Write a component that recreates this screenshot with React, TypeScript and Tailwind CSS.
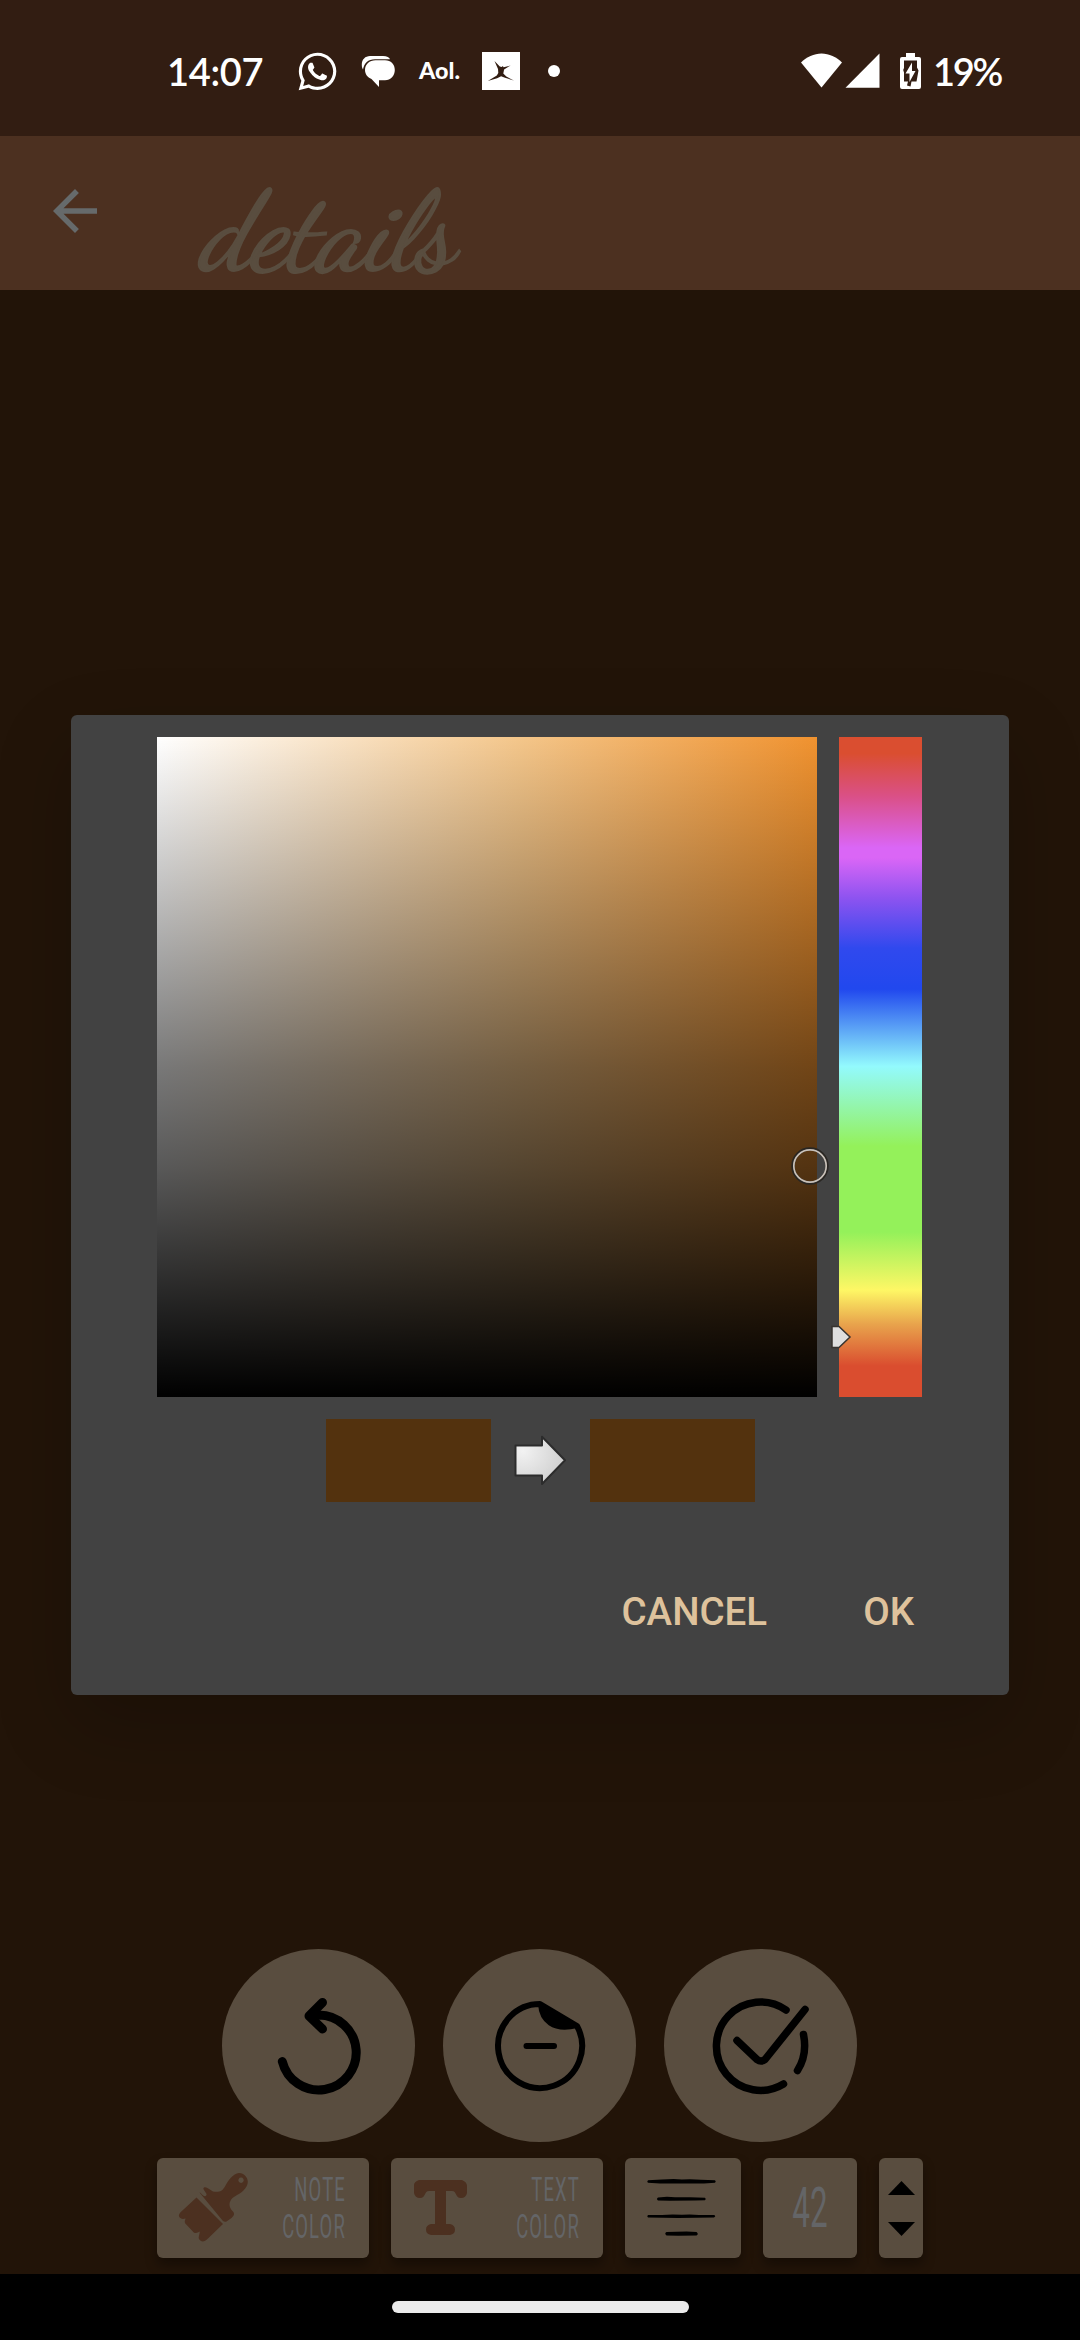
import React from "react";
import { FaWhatsapp } from "react-icons/fa";

function StatusBar() {
  return (
    <div className="flex h-[136px] w-full items-start justify-between bg-[#321d12] pr-[78px] pl-[167px] text-white">
      <div className="flex h-[142px] items-center">
        <span className="w-[130px] font-['Lato'] text-[38px] leading-none font-semibold tracking-[-0.3px]">14:07</span>
        <FaWhatsapp className="h-[43px] w-[41px]" />
        <svg className="ml-[23px] h-[36px] w-[36px]" viewBox="361 54 36 36">
          <path d="M370 57h13c4 0 6.500 1.500 7 3.200h-15c-7 0-11 4-12 10.300-1-1.500-1.200-3-1.200-5 0-5 3.500-8.500 8.200-8.500z" fill="#fff" />
          <path d="M375.500 61.200h9.500c6 0 9.800 4 9.800 9.800s-4 10.300-9.800 10.300h-6v6.700l-7.500-8c-4-1.600-6.500-5-6.500-9 0-5.800 4.500-9.800 10.500-9.800z" fill="#fff" />
        </svg>
        <span className="ml-[22px] w-[41px] origin-left scale-x-[1.06] font-['Lato'] text-[22px] leading-none font-black">Aol.</span>
        <svg className="ml-[22px] h-[38px] w-[38px]" viewBox="0 0 38 38">
          <path d="M0 0h38v38H0z" fill="#fff" />
          <path d="M12.500 9 17.800 14.500l2 .5 1-1 .8 1.200 7-1.700-6.500 4-.8 4 3 3 7.500 4-9.500-3-3.200-1.200-4 2-9.300 2.700 9-5.500 1.500-2.500-.3-4z" fill="#321d12" />
        </svg>
        <span className="ml-[28px] h-3 w-3 rounded-full bg-white" />
      </div>
      <div className="flex h-[142px] items-center">
        <svg className="h-[38px] w-[120px]" viewBox="801 52 120 38">
          <path d="M801 62.500c5.500-5.500 13-9 20.500-9s15 3.500 20.500 9L821.500 87.500z" fill="#fff" />
          <path d="M845.500 87.800 879.500 53.500v34.300z" fill="#fff" />
          <path d="M906 53h9v4h4a2 2 0 0 1 2 2v28a2 2 0 0 1-2 2h-17a2 2 0 0 1-2-2V59a2 2 0 0 1 2-2h4z" fill="#fff" />
          <path d="M904 60.500h13v7l1.500 3-2 11-5 0-1 5-3.500-1 1-4h-4v-9l-.8-2.500.8-2z" fill="#321d12" />
          <path d="M912 62.500v8.500h3.500L909.500 82v-8.500H905.500z" fill="#fff" />
        </svg>
        <span className="ml-[12px] w-[69px] font-['Lato'] text-[38px] leading-none font-semibold tracking-[-2.300px]">19%</span>
      </div>
    </div>
  );
}

function Header() {
  return (
    <header className="flex h-[154px] w-full bg-[#4c3020] pt-[42px] pl-[42px]">
      <svg className="h-[66px] w-[66px]" viewBox="0 0 24 24" fill="#666a6b">
        <path d="M20 11H7.830l5.590-5.590L12 4l-8 8 8 8 1.410-1.410L7.830 13H20v-2z" />
      </svg>
      <h1 className="mt-[2px] ml-[94px] origin-bottom-left skew-x-6 font-['Dancing_Script','Liberation_Serif',serif] text-[111px] leading-[106px] tracking-[-1px] text-[#594d3f] italic [-webkit-text-stroke:2px_#594d3f]">details</h1>
    </header>
  );
}

function RoundButton({ children }: { children: React.ReactNode }) {
  return (
    <button className="flex h-[193px] w-[193px] items-center justify-center rounded-full bg-[#594d3f]">
      {children}
    </button>
  );
}

function Actions() {
  return (
    <div className="mr-px flex justify-center gap-[28px]">
      <RoundButton>
        <svg className="h-[193px] w-[193px]" viewBox="0 0 193 193" fill="none" stroke="#000" strokeWidth="9" strokeLinecap="round" strokeLinejoin="round">
          <path d="M60.300 112.500A37.500 37.500 0 1 0 96.500 66L89 66.500" />
          <path d="M100.500 53.500 87 67l13.500 13" />
        </svg>
      </RoundButton>
      <RoundButton>
        <svg className="h-[193px] w-[193px]" viewBox="0 0 193 193" fill="none" stroke="#000" strokeWidth="6" strokeLinecap="round" strokeLinejoin="round">
          <path d="M97 55A42 42 0 1 0 134 77z" />
          <path d="M97 55C98 72 110 83 134 77z" fill="#000" strokeWidth="4" />
          <path d="M83.500 97H111" />
        </svg>
      </RoundButton>
      <RoundButton>
        <svg className="h-[193px] w-[193px]" viewBox="0 0 193 193" fill="none" stroke="#000" strokeWidth="7.500" strokeLinecap="round" strokeLinejoin="round">
          <path d="M122 61A44.200 44.200 0 1 0 119.500 135" />
          <path d="M139.500 85.500c2.500 12.500 1 25-6 36" />
          <path d="M73 91.500 93 110.500q4 3 8 0L141 60.500" />
        </svg>
      </RoundButton>
    </div>
  );
}

const tile = "h-[100px] rounded-md bg-[#594d3f] shadow-[0_7px_12px_rgba(0,0,0,0.35)]";

function TwoLine({ top, bottom }: { top: string; bottom: string }) {
  return (
    <div className="-ml-16 origin-right scale-x-[0.56] text-right font-['Roboto'] text-[33px] leading-[37px] font-normal tracking-[2px] text-[#646567]">
      <div>{top}</div>
      <div>{bottom}</div>
    </div>
  );
}

function Toolbar() {
  return (
    <div className="mt-4 flex justify-center gap-[22px]">
      <button className={`${tile} flex w-[212px] items-start justify-between pt-[13px] pr-[23px] pl-[20px]`}>
        <svg className="h-[74px] w-[74px] shrink-0" viewBox="177 2171 74 74" fill="#4c3020">
          <path
            fillRule="evenodd"
            d="M196.500 2197.500 223 2224l-15 14.500c-4 4-7 3.500-9 .500-1-1.500.5-4 .8-7.500-2 1.500-4 2-6 1l-8.500-9c-1.500-3 1-5 0-5-3 1-5 0-6-1.500-1-2 0-3 1.500-5z"
          />
          <path
            fillRule="evenodd"
            d="M199.500 2192.500c1-1 5 6.500 7 2.500 1-2-5-6-2.500-7.500 3-1 5 2 9 4 6 1 9 0 12-5 3-6 8-13 14-13.500 6 0 10 6 8.500 11-2 7-9 10-15 14-4 4-4 9 0 13 3 3 1 5-1 7l-5 3.500q-2 1-4-1zM241 2177.500a2.700 2.700 0 1 0 .1 0z"
          />
        </svg>
        <TwoLine top="NOTE" bottom="COLOR" />
      </button>
      <button className={`${tile} flex w-[212px] items-start justify-between pt-[13px] pr-[23px] pl-[20px]`}>
        <svg className="h-[74px] w-[60px] shrink-0" viewBox="411 2171 60 74" fill="#4c3020">
          <path d="M419 2180h43q5 2 5 6v7q-1 5-6 5c-6 0-4-7-9-7h-6v33h4q5 1 5 5.500t-5 5.500h-19q-5-1-5-5.500t5-5.500h4v-33h-6c-5 0-3 7-9 7q-5 0-6-5v-8q0-3 5-5z" />
        </svg>
        <TwoLine top="TEXT" bottom="COLOR" />
      </button>
      <button className={`${tile} flex w-[116px] items-center justify-center`}>
        <svg className="h-[100px] w-[116px]" viewBox="0 0 116 100">
          <path d="M23 22.300q-1.500 1.500 0 2.500l12 .8h44l11-.8q1.500-1.300 0-2.500l-14-.5q-8-1-19-.4-9-.8-20 .2z" />
          <path d="M33 39.500q-2 1.500 0 3l12 .3 25-.2 10-.4q1.500-1.200 0-2.400l-15-.5-15 0-8-.6z" />
          <path d="M23 57q-1.500 1.300 0 2.600l30 .4 36-.4q2.500-1.300 0-2.500l-15-.2q-8-.9-17-.2-11-.7-20 .2z" />
          <path d="M41.500 74q-2.500 1.500 0 3.500l12 .2 18-.2q2.500-1.500 0-3.500l-10-.5z" />
        </svg>
      </button>
      <button className={`${tile} flex w-[94px] items-center justify-center`}>
        <span className="scale-x-[0.57] font-['Roboto'] text-[55px] leading-none font-normal text-[#646567]">42</span>
      </button>
      <div className={`${tile} flex w-[44px] flex-col items-center justify-center gap-[27px]`}>
        <svg className="h-[14px] w-[27px]" viewBox="0 0 27 14"><path d="M0 14 13.500 0 27 14z" /></svg>
        <svg className="h-[14px] w-[27px]" viewBox="0 0 27 14"><path d="M0 0h27L13.500 14z" /></svg>
      </div>
    </div>
  );
}

function ColorDialog() {
  return (
    <section
      role="dialog"
      className="absolute top-[715px] left-[71px] flex h-[980px] w-[938px] flex-col items-center rounded-md bg-[#424242] pt-[22px] shadow-[0_30px_80px_rgba(0,0,0,0.2)]"
    >
      <div className="mr-px flex gap-[22px]">
        <div className="relative h-[660px] w-[660px] bg-[linear-gradient(to_bottom,rgba(0,0,0,0)_0%,rgba(0,0,0,0.38)_36%,rgba(0,0,0,0.53)_50%,rgba(0,0,0,0.65)_65%,#000_100%),linear-gradient(to_right,#fff,#f4c68a_55%,#f0922f)]">
          <svg className="absolute top-[410px] left-[634px] h-[38px] w-[38px]" viewBox="0 0 38 38" fill="none">
            <circle cx="19" cy="19" r="17" stroke="#292622" strokeWidth="3.500" />
            <circle cx="19" cy="19" r="16.200" stroke="#c9c1b9" strokeWidth="1.700" />
          </svg>
        </div>
        <div className="relative h-[660px] w-[83px] bg-[linear-gradient(to_bottom,#da4e30_0%,#da4e30_2.500%,#da5087_9%,#da66f6_16.800%,#da66f6_18.300%,#8c53f0_24.500%,#3049ee_32%,#2148ee_38.200%,#93fafd_49.900%,#94f15a_62%,#94f15a_75%,#fef765_83.800%,#e8a34c_89%,#da4d2f_95.300%,#da4d2f_100%)]">
          <svg className="absolute top-[588px] left-[-9px] h-[24px] w-[22px]" viewBox="0 0 22 24">
            <path d="M2 1.500h7L20 12 9 22.500H2z" fill="#dedede" stroke="#37332f" strokeWidth="1.500" />
          </svg>
        </div>
      </div>
      <div className="mt-[22px] flex items-center gap-[22px]">
        <div className="h-[83px] w-[165px] bg-[#53320e]" />
        <svg className="h-[55px] w-[55px]" viewBox="512 1433 55 55">
          <defs>
            <radialGradient id="arrowFill" cx="0.15" cy="0.3" r="0.9">
              <stop offset="0" stopColor="#f2f2f2" />
              <stop offset="1" stopColor="#cecece" />
            </radialGradient>
          </defs>
          <path d="M514.500 1445.500h26.500v-8.800l23 23.600-23 23.700v-8.500h-26.500z" fill="url(#arrowFill)" stroke="#2c2c2c" strokeWidth="2" strokeLinejoin="round" />
        </svg>
        <div className="h-[83px] w-[165px] bg-[#53320e]" />
      </div>
      <div className="mt-[83px] flex w-full justify-end gap-[96px] pr-[95px] font-['Roboto'] text-[38.500px] leading-[54px] font-medium text-[#dec29c]">
        <button>CANCEL</button>
        <button>OK</button>
      </div>
    </section>
  );
}

export default function App() {
  return (
    <main className="relative flex h-[2340px] w-[1080px] flex-col overflow-hidden bg-[#221408]">
      <StatusBar />
      <Header />
      <div className="flex flex-1 flex-col justify-end pb-4">
        <Actions />
        <Toolbar />
      </div>
      <div className="z-10 flex h-[66px] items-start justify-center bg-black pt-[27px]">
        <div className="h-[12px] w-[297px] rounded-full bg-[#ebebeb]" />
      </div>
      <ColorDialog />
    </main>
  );
}
